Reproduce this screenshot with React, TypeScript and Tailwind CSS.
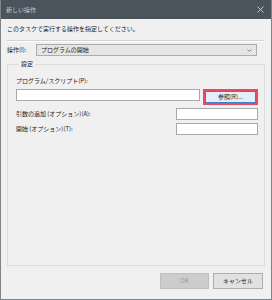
const jp = "font-['Noto_Sans_CJK_JP','Noto_Sans',sans-serif]";

function TextBox({ className = "" }: { className?: string }) {
  return <div className={`h-[12px] bg-white border border-[#a9a9a9] ${className}`} />;
}

export default function App() {
  return (
    <div
      className={`w-[272px] h-[300px] flex flex-col bg-[#f0f0f0] border-x border-b border-[#7d858b] text-[6px] leading-[8px] text-[#1b1b1b] ${jp}`}
    >
      {/* title bar */}
      <div className="h-[19px] shrink-0 bg-[#4b545a] flex items-center justify-between pl-[5px] pr-[7px] text-[#c5cacd]">
        <span>新しい操作</span>
        <svg width="7" height="7" viewBox="0 0 7 7">
          <path d="M0.5 0.5 L6.5 6.5 M6.5 0.5 L0.5 6.5" stroke="#c5cacd" strokeWidth="1" />
        </svg>
      </div>

      <div className="flex-1 flex flex-col px-[6px] pb-[10px]">
        <p className="mt-[6px] h-[8px]">このタスクで実行する操作を指定してください。</p>
        <div className="mt-[7px] mr-[1px] border-t border-[#d3d3d3] border-b border-b-white" />

        {/* action dropdown */}
        <div className="mt-[2px] flex items-center h-[12px]">
          <span className="w-[29px] shrink-0">操作(I):</span>
          <div className="flex-1 mr-[8px] h-[12px] bg-[#e5e5e5] border border-[#acacac] flex items-center justify-between pl-[4px] pr-[4px]">
            <span>プログラムの開始</span>
            <svg width="5" height="3" viewBox="0 0 5 3">
              <polyline points="0.5,0.5 2.5,2.5 4.5,0.5" fill="none" stroke="#6a6a6a" strokeWidth="0.8" />
            </svg>
          </div>
        </div>

        {/* settings group */}
        <fieldset className="mt-[4px] flex-1 min-h-0 border border-[#dcdcdc] pl-[8px] pr-[6px]">
          <legend className="ml-[3px] px-[2px] h-[8px]">設定</legend>
          <p className="mt-[9px] h-[8px]">プログラム/スクリプト(P):</p>
          <div className="mt-[4px] flex items-start gap-[3px]">
            <TextBox className="flex-1" />
            <div className="w-[55px] h-[16px] shrink-0 border-2 border-[#ea4a5d] p-0">
              <div className="h-full bg-[#e3eef9] border border-[#3f7fcb] flex items-center justify-center">
                参照(R)...
              </div>
            </div>
          </div>
          <div className="mt-[3px] flex items-center justify-between">
            <span>引数の追加 (オプション)(A):</span>
            <TextBox className="w-[82px]" />
          </div>
          <div className="mt-[3px] flex items-center justify-between">
            <span>開始 (オプション)(T):</span>
            <TextBox className="w-[82px]" />
          </div>
        </fieldset>

        {/* buttons */}
        <div className="mt-[7px] mr-[2px] flex justify-end gap-[4px]">
          <div className="w-[49px] h-[16px] bg-[#cccccc] border border-[#bfbfbf] text-[#9c9c9c] flex items-center justify-center">
            OK
          </div>
          <div className="w-[50px] h-[16px] bg-[#e1e1e1] border border-[#adadad] flex items-center justify-center">
            キャンセル
          </div>
        </div>
      </div>
    </div>
  );
}
